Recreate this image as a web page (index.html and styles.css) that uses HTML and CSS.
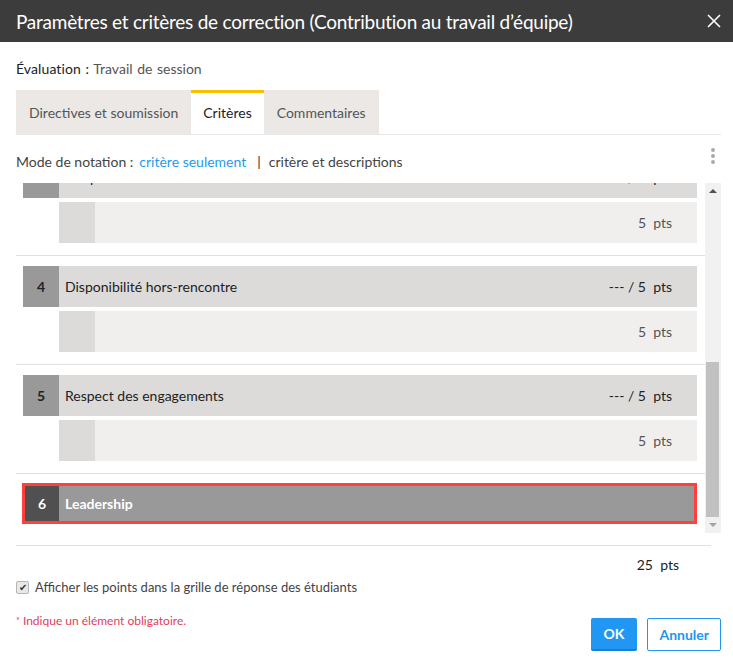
FILE: index.html
```html
<!DOCTYPE html>
<html lang="fr">
<head>
  <meta charset="UTF-8">
  <meta name="viewport" content="width=device-width, initial-scale=1.0">
  <title>Paramètres et critères de correction</title>
  <link rel="stylesheet" href="styles.css">
</head>
<body>
  <div class="modal">
    <div class="modal-header">
      <h1 class="modal-title">Paramètres et critères de correction (Contribution au travail d’équipe)</h1>
      <button class="close-btn" aria-label="Fermer">
        <svg width="14" height="14" viewBox="0 0 14 14"><path d="M1 1 L13 13 M13 1 L1 13" stroke="#fff" stroke-width="1.6" fill="none"/></svg>
      </button>
    </div>

    <div class="modal-body">
      <div class="eval"><span class="eval-label">Évaluation :</span> Travail de session</div>

      <div class="tabs">
        <div class="tab">Directives et soumission</div>
        <div class="tab active">Critères</div>
        <div class="tab">Commentaires</div>
      </div>

      <div class="mode">
        <span class="mode-label">Mode de notation :</span>
        <a class="mode-link current">critère seulement</a>
        <span class="mode-sep">|</span>
        <a class="mode-link">critère et descriptions</a>
        <span class="kebab"><i></i><i></i><i></i></span>
      </div>

      <div class="list-wrap">
        <div class="list">
          <!-- criteria 1-2 are scrolled out of view -->
          <div class="criterion">
            <div class="crit-head"><span class="crit-num">3</span><span class="crit-name">Coopération</span><span class="crit-pts">--- / 5&nbsp; pts</span></div>
            <div class="crit-level"><span class="level-box"></span><span class="level-pts">5&nbsp; pts</span></div>
          </div>
          <div class="criterion">
            <div class="crit-head"><span class="crit-num">4</span><span class="crit-name">Disponibilité hors-rencontre</span><span class="crit-pts">--- / 5&nbsp; pts</span></div>
            <div class="crit-level"><span class="level-box"></span><span class="level-pts">5&nbsp; pts</span></div>
          </div>
          <div class="criterion">
            <div class="crit-head"><span class="crit-num">5</span><span class="crit-name">Respect des engagements</span><span class="crit-pts">--- / 5&nbsp; pts</span></div>
            <div class="crit-level"><span class="level-box"></span><span class="level-pts">5&nbsp; pts</span></div>
          </div>
          <div class="criterion last">
            <div class="crit-head selected"><span class="crit-num">6</span><span class="crit-name">Leadership</span></div>
          </div>
        </div>
        <div class="scrollbar">
          <span class="sb-btn up"></span>
          <span class="sb-space"></span>
          <span class="sb-thumb"></span>
          <span class="sb-btn down"></span>
        </div>
      </div>

      <div class="total">25&nbsp; pts</div>

      <label class="show-points">
        <span class="checkbox">&#10004;</span>
        Afficher les points dans la grille de réponse des étudiants
      </label>

      <div class="modal-footer">
        <div class="required"><span class="star">*</span> Indique un élément obligatoire.</div>
        <div class="actions">
          <button class="btn btn-primary">OK</button>
          <button class="btn btn-secondary">Annuler</button>
        </div>
      </div>
    </div>
  </div>
</body>
</html>
```
FILE: styles.css
```css
body {
  margin: 0;
  padding: 0;
  font-family: Lato, "Liberation Sans", sans-serif;
  font-size: 14px;
  color: #222;
  background: #fff;
}
.modal {
  width: 733px;
  height: 668px;
  overflow: hidden;
}
.modal-header {
  height: 42px;
  background-color: #3c3c3c;
  display: flex;
  align-items: center;
  padding: 0 12px 0 16px;
}
.modal-title {
  flex: 1;
  margin: 0;
  font-size: 19px;
  font-weight: normal;
  letter-spacing: -0.25px;
  color: #fff;
  white-space: nowrap;
}
.close-btn {
  background: none;
  border: none;
  padding: 0;
  width: 14px;
  height: 14px;
  display: flex;
  cursor: pointer;
}
.modal-body {
  padding: 0 12px 0 16px;
}
.eval {
  margin-top: 18px;
  line-height: 18px;
  color: #555;
  word-spacing: 1px;
}
.eval-label {
  color: #222;
  letter-spacing: 0.1px;
}
.tabs {
  margin-top: 12px;
  height: 44px;
  display: flex;
  border-bottom: 1px solid #e6e6e6;
}
.tab {
  background-color: #ebe8e5;
  color: #555;
  padding: 0 13px;
  display: flex;
  align-items: center;
}
.tab.active {
  background-color: #fff;
  color: #222;
  padding: 0 12px 3px;
  border-top: 3px solid #f5c000;
}
.mode {
  height: 48px;
  box-sizing: border-box;
  padding-top: 18px;
  line-height: 18px;
  display: flex;
  color: #444;
}
.mode-label {
  margin-right: 6px;
}
.mode-link {
  color: #444;
}
.mode-link.current {
  color: #1e9bf0;
}
.mode-sep {
  margin: 0 8px 0 11px;
  color: #333;
}
.kebab {
  margin-left: auto;
  margin-right: 6px;
  margin-top: -5px;
  display: flex;
  flex-direction: column;
  gap: 2px;
}
.kebab i {
  width: 4px;
  height: 4px;
  border-radius: 50%;
  background: #aaa;
}
.list-wrap {
  height: 350px;
  display: flex;
}
.list {
  flex: 1;
  overflow: hidden;
  display: flex;
  flex-direction: column;
  justify-content: flex-end;
}
.criterion {
  flex-shrink: 0;
  border-top: 1px solid #e0e0e0;
  padding: 10px 8px 12px 7px;
}
.criterion.last {
  padding: 9px 8px 9px 7px;
}
.crit-head {
  height: 41px;
  display: flex;
  align-items: center;
  background-color: #dcdbda;
}
.crit-num {
  width: 36px;
  align-self: stretch;
  display: flex;
  align-items: center;
  justify-content: center;
  background-color: #999;
  font-weight: bold;
}
.crit-name {
  flex: 1;
  padding-left: 6px;
}
.crit-pts {
  padding-right: 25px;
}
.crit-head.selected {
  box-sizing: border-box;
  border: 3px solid #ff4040;
  margin-left: -1px;
  background-color: #999;
  color: #fff;
  font-weight: bold;
}
.crit-head.selected .crit-num {
  width: 34px;
  background-color: #505050;
}
.crit-level {
  margin: 4px 0 0 36px;
  height: 41px;
  display: flex;
  align-items: center;
  background-color: #f0efee;
}
.level-box {
  width: 36px;
  align-self: stretch;
  background-color: #dcdbda;
}
.level-pts {
  margin-left: auto;
  padding-right: 25px;
  color: #555;
}
.scrollbar {
  width: 16px;
  display: flex;
  flex-direction: column;
  background-color: #f1f1f1;
}
.sb-btn {
  height: 16px;
  position: relative;
}
.sb-btn::after {
  content: "";
  position: absolute;
  left: 4px;
  top: 6px;
  border-left: 4px solid transparent;
  border-right: 4px solid transparent;
}
.sb-btn.up::after {
  border-bottom: 4px solid #505050;
}
.sb-btn.down::after {
  border-top: 4px solid #a3a3a3;
}
.sb-space {
  flex: 1;
}
.sb-thumb {
  height: 155px;
  margin: 0 2px 0 1px;
  background-color: #c1c1c1;
}
.total {
  margin-top: 12px;
  margin-right: 10px;
  border-top: 1px solid #e0e0e0;
  padding: 10px 32px 0 0;
  line-height: 18px;
  text-align: right;
}
.show-points {
  margin-top: 4px;
  line-height: 18px;
  display: flex;
  align-items: center;
  font-size: 13px;
  color: #444;
}
.checkbox {
  width: 11px;
  height: 11px;
  margin-right: 6px;
  border: 1px solid #b5b5b5;
  border-radius: 2px;
  background: #e8e8e8;
  color: #333;
  font-size: 10px;
  line-height: 11px;
  text-align: center;
}
.modal-footer {
  margin-top: 16px;
  display: flex;
  align-items: flex-start;
}
.required {
  flex: 1;
  line-height: 18px;
  font-size: 12px;
  color: #e0405c;
}
.star {
  font-size: 9px;
  vertical-align: top;
}
.actions {
  margin-top: 6px;
  display: flex;
  gap: 10px;
}
.btn {
  height: 33px;
  padding: 0 11px;
  font-family: Lato, "Liberation Sans", sans-serif;
  font-size: 14px;
  font-weight: bold;
  border-radius: 2px;
  cursor: pointer;
}
.btn-primary {
  background-color: #2196f3;
  color: #fff;
  border: none;
  border-bottom: 2px solid #1a7fd0;
  padding: 0 13px;
}
.btn-secondary {
  background-color: #fff;
  color: #2196f3;
  border: 1px solid #2196f3;
}
```
